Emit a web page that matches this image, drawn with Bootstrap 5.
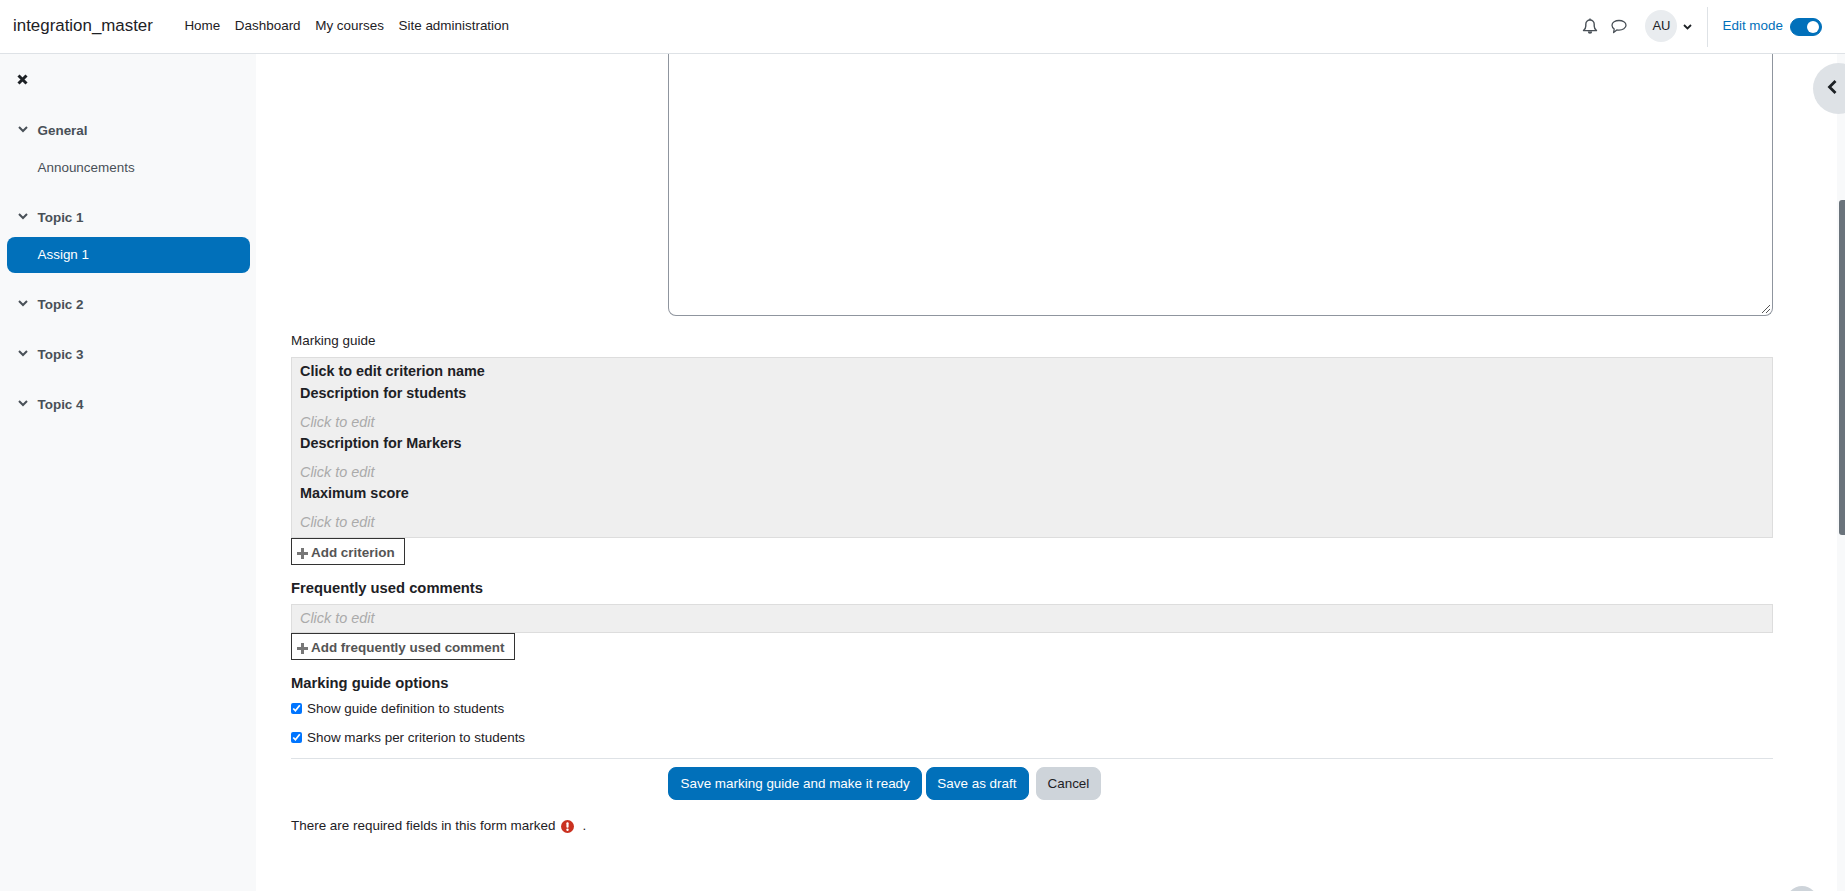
<!DOCTYPE html>
<html lang="en">
<head>
<meta charset="utf-8">
<title>Marking guide</title>
<link href="https://cdn.jsdelivr.net/npm/bootstrap@5.3.0/dist/css/bootstrap.min.css" rel="stylesheet">
<style>
html,body{height:891px;overflow:hidden}
body{font-family:"Liberation Sans",Arial,sans-serif;font-size:13.44px;color:#1d2125;background:#fff}
.topbar{height:54px;border-bottom:1px solid #dee2e6;background:#fff;padding:0 23px 0 13px;flex-wrap:nowrap}
.brandname{font-size:16.9px;color:#1d2125;padding:0;margin:0 31.5px 2px 0;line-height:25px}
.topbar .nav-link{font-size:13.44px;color:#1d2125;padding:0;margin:0 14.6px 2px 0;line-height:21px}
.tool-icon{width:16px;height:16px;display:block}
.bellgap{margin:0 13px 2px 0}
.msggap{margin:0 18px 1px 0}
.avatar-dot{width:32px;height:32px;border-radius:50%;background:#e9ecef;font-size:13px;color:#1d2125;margin-bottom:2px}
.chevgap{margin:1px 0 0 6px}
.vsep{width:1px;height:40px;background:#dee2e6;margin:0 14px 0 15px}
.editlabel{font-size:13.44px;color:#0170ba;margin:0 7px 1px 0}
.editswitch{width:32px!important;height:18px;margin:0!important;background-color:#0170ba!important;border-color:#0170ba!important;float:none}
.pagewrap{height:837px}
.sideblock{width:256px;background:#f8f9fa;flex:none;padding:0 6px 0 7px}
.closerow{height:50px;padding:0 0 0 10px}
.sectitle{font-size:13.44px;font-weight:700;color:#495057;line-height:20px;height:20px;padding-left:11px;gap:9.5px}
.sectitle svg{width:10px;height:7px;flex:none;margin-bottom:4px}
.subitem{font-size:13.44px;color:#495057;padding-left:30.5px;height:36px;line-height:36px}
.subitem.activeitem{background:#0170ba;color:#fff;border-radius:8px}
.mainpane{flex:1 1 auto;padding:0 64px 0 35px;min-width:0}
.bigarea{height:262px;margin-left:377px;border:1px solid #8f959e;border-top:0;border-radius:0 0 8px 8px;position:relative}
.grip{position:absolute;right:1px;bottom:1px;width:10px;height:10px}
.guidelabel{font-size:13.44px;margin:15px 0 6px;line-height:20px}
.greybox{background:#efefef;border:1px solid #ddd;padding:2px 8px 5px}
.crit{font-size:14.4px;font-weight:700;line-height:22px}
.hint{font-size:14.4px;font-style:italic;color:#aaa;line-height:22px}
.hintgap{padding-top:8px;line-height:20px}
.addbox{display:inline-flex;align-items:center;gap:3px;height:27px;border:1px solid #333;padding:4px 9.500px 0 5px;font-size:13.44px;font-weight:700;color:#555;vertical-align:top}
.addbox svg{width:11px;height:11px}
.subhead{font-size:14.784px;font-weight:700;line-height:20px}
.optline{font-size:13.44px;line-height:20px;gap:5px;height:20px}
.optline input{margin:0 0 2px;width:11px;height:11px;flex:none}
.rulehr{margin:10px 0 8px;border:0;border-top:1px solid #dee2e6;opacity:1}
.actionbtn{font-size:13.44px;height:33px;padding:0 11px;border-radius:8px;line-height:31px}
.actionwide{padding:0 11.5px}
.actiontight{padding:0 11px 0 10px;margin-left:4px}
.btn-blue{background:#0170ba;border-color:#0170ba;color:#fff}
.btn-grey{background:#ced4da;border-color:#ced4da;color:#1d2125;margin-left:7px}
.reqnote{font-size:13.44px;line-height:20px;margin-top:16px}
.reqicon{margin:0 8px 0 6px}
.scrolltrack{width:8px;flex:none;background:#f8f9fa;padding:146px 0 0 2px}
.scrollthumb{width:6px;height:335px;background:#6a737b;border-radius:3px 0 0 3px}
.drawertab{position:absolute;left:1813px;top:63px;width:51px;height:51px;border-radius:50%;background:#dee2e6}
.drawertab svg{position:absolute;left:13px;top:15.5px;width:12px;height:16px}
.backtop{position:absolute;left:1786px;top:886px;width:32px;height:32px;border-radius:50%;background:#ced4da}
.gap9{margin-top:9px}.gap17{margin-top:17px}.gap22{margin-top:22px}.gap30{margin-top:30px}
.gap6{margin-top:6px}.gap13{margin-top:13px}
.mainactions{margin-left:377px}
.freqbox{height:29px;margin-top:6px;padding:0 8px 1px}
</style>
</head>
<body>
<nav class="navbar topbar d-flex align-items-center">
  <a class="navbar-brand brandname" href="#">integration_master</a>
  <ul class="nav flex-nowrap me-auto">
    <li class="nav-item"><a class="nav-link" href="#">Home</a></li>
    <li class="nav-item"><a class="nav-link" href="#">Dashboard</a></li>
    <li class="nav-item"><a class="nav-link" href="#">My courses</a></li>
    <li class="nav-item"><a class="nav-link" href="#">Site administration</a></li>
  </ul>
  <div class="d-flex align-items-center">
    <svg class="tool-icon bellgap" viewBox="0 0 16 16" fill="none" stroke="#495057" stroke-width="1.400"><path d="M1.500 12.600c1.500-1.200 2.300-2.300 2.300-4.600V6.200a4.200 4.200 0 0 1 8.400 0V8c0 2.300.8 3.400 2.300 4.600z" stroke-linejoin="round"/><path d="M6.500 13.500a1.500 1.500 0 0 0 3 0" fill="#495057"/><path d="M8 .5v1.500"/></svg>
    <svg class="tool-icon msggap" viewBox="0 0 16 16" fill="none" stroke="#495057" stroke-width="1.300"><path d="M8 2.500c3.700 0 7 1.900 7 4.800s-3.300 4.800-7 4.800c-.8 0-1.500-.1-2.200-.2L2.600 14.500l.6-3.500C1.800 10 1 8.700 1 7.300c0-2.900 3.300-4.800 7-4.800z" stroke-linejoin="round"/></svg>
    <div class="avatar-dot d-flex align-items-center justify-content-center">AU</div>
    <svg class="chevgap" width="9" height="6" viewBox="0 0 9 6" fill="none" stroke="#1d2125" stroke-width="1.800"><path d="M1 1l3.500 3.500L8 1"/></svg>
    <div class="vsep"></div>
    <span class="editlabel">Edit mode</span>
    <div class="form-check form-switch m-0 p-0 d-flex align-items-center"><input class="form-check-input editswitch" type="checkbox" role="switch" checked aria-label="Edit mode"></div>
  </div>
</nav>
<div class="d-flex pagewrap">
  <aside class="sideblock">
    <div class="closerow d-flex align-items-center"><svg width="11" height="11" viewBox="0 0 11 11" stroke="#1d2125" stroke-width="3"><path d="M1.500 1.500l8 8M9.500 1.500l-8 8"/></svg></div>
    <div class="sectitle d-flex align-items-center gap17"><svg viewBox="0 0 10 7" fill="none" stroke="#495057" stroke-width="2"><path d="M1 1l4 4 4-4"/></svg>General</div>
    <div class="subitem gap9">Announcements</div>
    <div class="sectitle d-flex align-items-center gap22"><svg viewBox="0 0 10 7" fill="none" stroke="#495057" stroke-width="2"><path d="M1 1l4 4 4-4"/></svg>Topic 1</div>
    <div class="subitem activeitem gap9">Assign 1</div>
    <div class="sectitle d-flex align-items-center gap22"><svg viewBox="0 0 10 7" fill="none" stroke="#495057" stroke-width="2"><path d="M1 1l4 4 4-4"/></svg>Topic 2</div>
    <div class="sectitle d-flex align-items-center gap30"><svg viewBox="0 0 10 7" fill="none" stroke="#495057" stroke-width="2"><path d="M1 1l4 4 4-4"/></svg>Topic 3</div>
    <div class="sectitle d-flex align-items-center gap30"><svg viewBox="0 0 10 7" fill="none" stroke="#495057" stroke-width="2"><path d="M1 1l4 4 4-4"/></svg>Topic 4</div>
  </aside>
  <main class="mainpane">
    <div class="bigarea"><svg class="grip" viewBox="0 0 10 10" stroke="#555" stroke-width="1" fill="none"><path d="M1 9l8-8M5 9l4-4"/></svg></div>
    <div class="guidelabel">Marking guide</div>
    <div class="greybox">
      <div class="crit">Click to edit criterion name</div>
      <div class="crit">Description for students</div>
      <div class="hint hintgap">Click to edit</div>
      <div class="crit">Description for Markers</div>
      <div class="hint hintgap">Click to edit</div>
      <div class="crit">Maximum score</div>
      <div class="hint hintgap">Click to edit</div>
    </div>
    <div class="addbox"><svg viewBox="0 0 11 11" fill="#777"><path d="M4 0h3v4h4v3H7v4H4V7H0V4h4z"/></svg>Add criterion</div>
    <div class="subhead gap13">Frequently used comments</div>
    <div class="greybox hint freqbox d-flex align-items-center">Click to edit</div>
    <div class="addbox"><svg viewBox="0 0 11 11" fill="#777"><path d="M4 0h3v4h4v3H7v4H4V7H0V4h4z"/></svg>Add frequently used comment</div>
    <div class="subhead gap13">Marking guide options</div>
    <label class="optline d-flex align-items-center gap6"><input type="checkbox" checked>Show guide definition to students</label>
    <label class="optline d-flex align-items-center gap9"><input type="checkbox" checked>Show marks per criterion to students</label>
    <hr class="rulehr">
    <div class="d-flex mainactions">
      <button class="btn actionbtn actionwide btn-blue" type="button">Save marking guide and make it ready</button>
      <button class="btn actionbtn actiontight btn-blue" type="button">Save as draft</button>
      <button class="btn actionbtn btn-grey" type="button">Cancel</button>
    </div>
    <div class="reqnote d-flex align-items-center">There are required fields in this form marked<svg class="reqicon" width="13" height="13" viewBox="0 0 13 13"><circle cx="6.500" cy="6.500" r="6.500" fill="#ca3120"/><rect x="5.400" y="2.300" width="2.200" height="5.400" rx="1" fill="#fff"/><circle cx="6.500" cy="9.800" r="1.200" fill="#fff"/></svg><span>.</span></div>
  </main>
  <div class="scrolltrack"><div class="scrollthumb"></div></div>
</div>
<div class="drawertab"><svg viewBox="0 0 12 16" fill="none" stroke="#1d2125" stroke-width="2.800"><path d="M9.500 2L3.500 8l6 6"/></svg></div>
<div class="backtop"></div>
<script src="https://cdn.jsdelivr.net/npm/bootstrap@5.3.0/dist/js/bootstrap.bundle.min.js"></script>
</body>
</html>
